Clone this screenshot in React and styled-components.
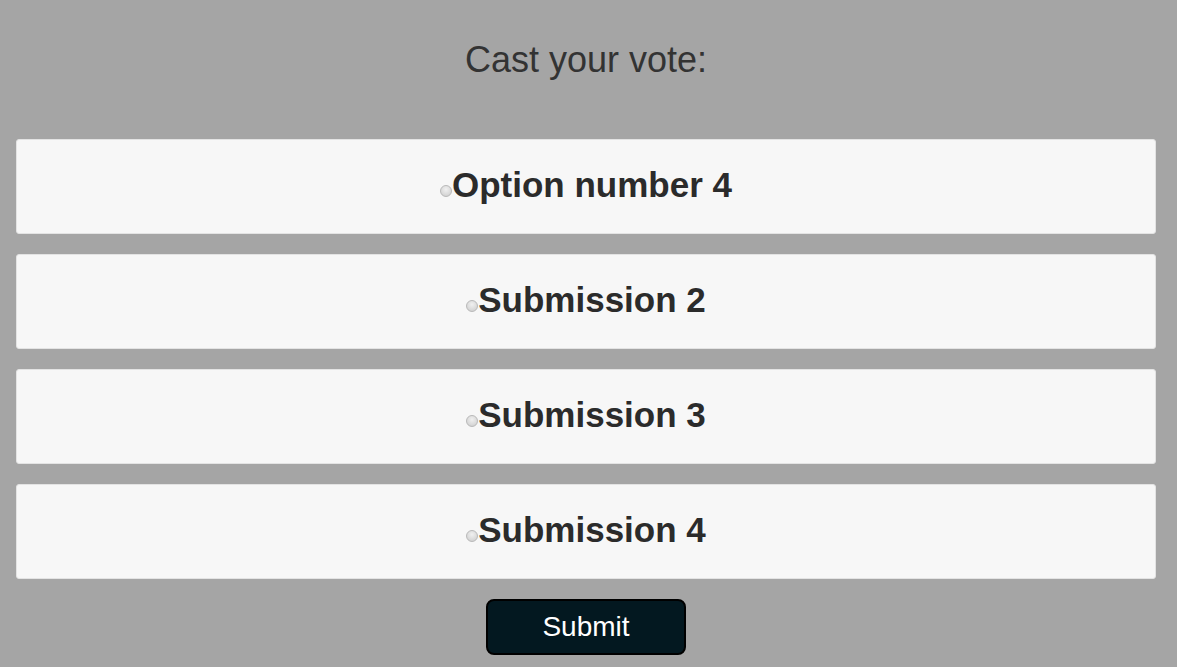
import React, { useState } from "react";
import styled, { createGlobalStyle } from "styled-components";

const Global = createGlobalStyle`
  html, body { margin: 0; padding: 0; background: #a5a5a5; }
  body { font-family: "Liberation Sans", Arial, sans-serif; }
`;

const Page = styled.div`
  padding: 0 21px 0 16px;
  display: flex;
  flex-direction: column;
  align-items: stretch;
`;

const Title = styled.h2`
  margin: 0;
  padding-top: 39px;
  height: 139px;
  box-sizing: border-box;
  text-align: center;
  font-weight: normal;
  font-size: 36px;
  line-height: 41px;
  color: #333333;
`;

const Form = styled.form`
  display: flex;
  flex-direction: column;
  gap: 20px;
`;

const Card = styled.label`
  display: flex;
  justify-content: center;
  align-items: center;
  height: 95px;
  box-sizing: border-box;
  background: #f7f7f7;
  border: 1px solid #e3e3e3;
  border-radius: 3px;
  cursor: pointer;
`;

const Radio = styled.input.attrs({ type: "radio" })`
  appearance: none;
  -webkit-appearance: none;
  margin: 0;
  width: 12px;
  height: 12px;
  border-radius: 50%;
  border: 1px solid #b9b9b9;
  background: radial-gradient(circle at 50% 35%, #f0f0f0 0%, #d8d8d8 65%, #c8c8c8 100%);
  box-sizing: border-box;
  align-self: center;
  position: relative;
  top: 4px;
  &:checked {
    background: radial-gradient(circle, #333 0 30%, #e8e8e8 35%);
  }
`;

const OptionText = styled.span`
  font-weight: bold;
  font-size: 35px;
  line-height: 40px;
  color: #2b2b2b;
  position: relative;
  top: -2px;
`;

const Actions = styled.div`
  display: flex;
  justify-content: center;
  padding: 0 0 12px;
`;

const SubmitButton = styled.button`
  width: 200px;
  height: 56px;
  background: #031820;
  color: #ffffff;
  border: 2px solid #000000;
  border-radius: 8px;
  font-family: "Liberation Sans", Arial, sans-serif;
  font-size: 28px;
  cursor: pointer;
`;

const options = ["Option number 4", "Submission 2", "Submission 3", "Submission 4"];

export default function App() {
  const [choice, setChoice] = useState(null);
  return (
    <>
      <Global />
      <Page>
        <Title>Cast your vote:</Title>
        <Form onSubmit={(e) => e.preventDefault()}>
          {options.map((o, i) => (
            <Card key={o}>
              <Radio name="vote" checked={choice === i} onChange={() => setChoice(i)} />
              <OptionText>{o}</OptionText>
            </Card>
          ))}
          <Actions>
            <SubmitButton type="submit">Submit</SubmitButton>
          </Actions>
        </Form>
      </Page>
    </>
  );
}
